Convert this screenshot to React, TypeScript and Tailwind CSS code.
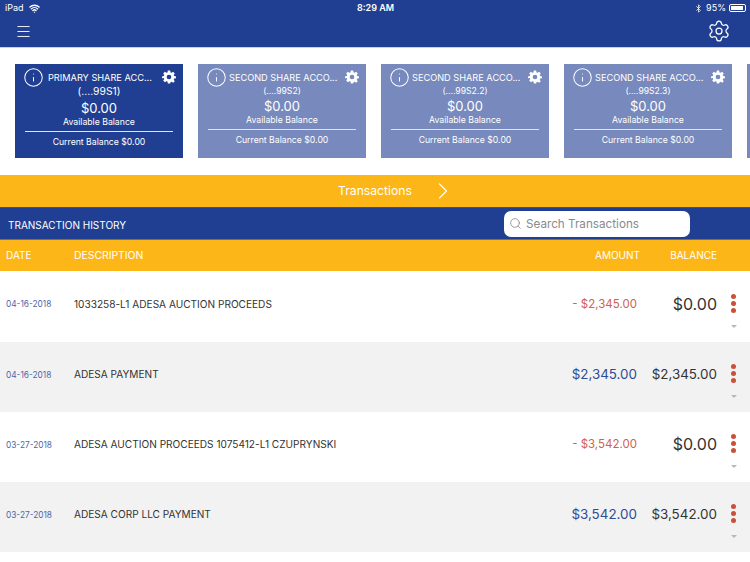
import { Settings, ChevronRight, Search, Wifi, Bluetooth, Menu, Info } from 'lucide-react'

const accounts = [
  { name: 'PRIMARY SHARE ACC...', num: '(....99S1)', primary: true },
  { name: 'SECOND SHARE ACCO...', num: '(....99S2)', primary: false },
  { name: 'SECOND SHARE ACCO...', num: '(....99S2.2)', primary: false },
  { name: 'SECOND SHARE ACCO...', num: '(....99S2.3)', primary: false },
]

const rows = [
  { date: '04-16-2018', desc: '1033258-L1 ADESA AUCTION PROCEEDS', amount: '- $2,345.00', credit: false, balance: '$0.00' },
  { date: '04-16-2018', desc: 'ADESA PAYMENT', amount: '$2,345.00', credit: true, balance: '$2,345.00' },
  { date: '03-27-2018', desc: 'ADESA AUCTION PROCEEDS 1075412-L1 CZUPRYNSKI', amount: '- $3,542.00', credit: false, balance: '$0.00' },
  { date: '03-27-2018', desc: 'ADESA CORP LLC PAYMENT', amount: '$3,542.00', credit: true, balance: '$3,542.00' },
]

function Gear() {
  return (
    <svg viewBox="0 0 24 24" className="w-[14px] h-[14px] shrink-0" fill="white">
      <path fillRule="evenodd" d="M10 1h4l.6 3.1 1.9.8 2.6-1.8 2.8 2.8-1.8 2.6.8 1.9L24 11v3l-3.1.6-.8 1.9 1.8 2.6-2.8 2.8-2.6-1.8-1.9.8L14 23h-4l-.6-3.1-1.9-.8-2.6 1.8-2.8-2.8 1.8-2.6-.8-1.9L0 14v-3l3.1-.6.8-1.9L2.1 5.9l2.8-2.8 2.6 1.8 1.9-.8L10 1zm2 7a4 4 0 1 0 0 8 4 4 0 0 0 0-8z" />
    </svg>
  )
}

function AccountCard({ name, num, primary }: { name: string; num: string; primary: boolean }) {
  return (
    <div className={`w-[168px] h-[94px] shrink-0 pl-[10px] pr-[7px] pt-[4px] text-white text-center ${primary ? 'bg-[#213f92]' : 'bg-[#7789bd]'}`}>
      <div className="flex items-center h-[18px]">
        <Info size={21} strokeWidth={1.15} className="shrink-0 -ml-[2px] -mr-[1px]" />
        <div className={`flex-1 pt-[1px] text-[9.2px] whitespace-nowrap text-left ${primary ? 'pl-[5px]' : 'pl-[3px]'}`}>{name}</div>
        <Gear />
      </div>
      <div className="pr-[3px]">
        <div className={`leading-[12px] -mt-px ${primary ? 'text-[10.3px]' : 'text-[8.6px]'}`}>{num}</div>
        <div className={`text-[13px] leading-[16px] ${primary ? 'mt-[3px]' : 'mt-[1px]'}`}>$0.00</div>
        <div className="text-[8.7px] leading-[12px]">Available Balance</div>
        <div className="border-t border-[#dfe4f2] mt-[3px] pt-[4px] text-[8.7px] leading-[12px]">Current Balance $0.00</div>
      </div>
    </div>
  )
}

export default function App() {
  return (
    <div className="w-[750px] h-[562px] overflow-hidden bg-white font-['Inter','Liberation_Sans',sans-serif]">
      <header className="bg-[#213f92] h-[48px] text-white border-b border-[#c9d1e6]">
        <div className="flex items-center justify-between h-[16px] pl-[5px] pr-[4px] text-[9px]">
          <div className="flex items-center gap-[5px] flex-1">
            <span>iPad</span>
            <Wifi size={11} strokeWidth={3} />
          </div>
          <span className="font-semibold">8:29 AM</span>
          <div className="flex items-center justify-end gap-[3px] flex-1">
            <Bluetooth size={9} />
            <span>95%</span>
            <div className="w-[17px] h-[8px] border border-white rounded-[2px] p-px">
              <div className="h-full w-[90%] bg-white" />
            </div>
          </div>
        </div>
        <div className="flex items-center justify-between pl-[15px] pr-[19px] h-[30px]">
          <Menu size={17} strokeWidth={1.3} />
          <Settings size={24} strokeWidth={1.25} />
        </div>
      </header>

      <section className="flex gap-[15px] pl-[15px] pt-[16px] pb-[17px] overflow-hidden">
        {accounts.map((a, i) => (
          <AccountCard key={i} {...a} />
        ))}
        <div className="w-[168px] h-[94px] shrink-0 bg-[#7789bd]" />
      </section>

      <div className="bg-[#fdb618] h-[32px] flex items-center text-white text-[12.2px]">
        <div className="flex-1" />
        <span className="pt-[1px]">Transactions</span>
        <div className="flex-1 flex items-center">
          <ChevronRight size={28} strokeWidth={1} className="ml-[17px]" />
        </div>
      </div>

      <div className="bg-[#213f92] h-[32px] flex items-center justify-between pl-[8px] pr-[60px] text-white border-t border-[#4a4f5c]">
        <span className="text-[10px] pt-[3px]">TRANSACTION HISTORY</span>
        <div className="w-[186px] h-[26px] bg-white rounded-[7px] flex items-center gap-[4px] pl-[5px] text-[11.7px] text-[#8a8a8e]">
          <Search size={13} strokeWidth={1.5} />
          <span className="pt-[2px]">Search Transactions</span>
        </div>
      </div>

      <div className="bg-[#fdb618] h-[32px] flex items-center text-white text-[10px] border-t border-[#7a7150]">
        <span className="w-[74px] pl-[6px]">DATE</span>
        <span className="flex-1 text-[10.4px]">DESCRIPTION</span>
        <span className="w-[80px] text-right">AMOUNT</span>
        <span className="w-[77px] text-right">BALANCE</span>
        <span className="w-[33px]" />
      </div>

      {rows.map((r, i) => (
        <div key={i} className={`flex items-center ${i === 0 ? 'h-[71px]' : 'h-[70px]'} ${i % 2 ? 'bg-[#f2f2f2]' : 'bg-white'}`}>
          <span className="w-[74px] pl-[6px] pb-[4px] text-[8.3px] text-[#4f66a8]">{r.date}</span>
          <span className="flex-1 pb-[4px] text-[10.1px] text-[#333333] whitespace-nowrap">{r.desc}</span>
          <span className={`w-[100px] text-right ${r.credit ? 'pb-[5px] text-[13.4px] text-[#2f4b96]' : 'pb-[4px] text-[11.5px] text-[#d25f4e]'}`}>{r.amount}</span>
          <span className={`w-[80px] pb-[6px] text-right text-[#333333] ${r.balance === '$0.00' ? 'text-[16px]' : 'text-[13.4px]'}`}>{r.balance}</span>
          <div className="w-[33px] flex flex-col items-center gap-[2px] pt-[8px]">
            <span className="w-[5px] h-[5px] rounded-full bg-[#c9513a]" />
            <span className="w-[5px] h-[5px] rounded-full bg-[#c9513a]" />
            <span className="w-[5px] h-[5px] rounded-full bg-[#c9513a]" />
            <span className="mt-[10px] w-0 h-0 border-x-[3px] border-x-transparent border-t-[3px] border-t-[#b8b8b8]" />
          </div>
        </div>
      ))}
    </div>
  )
}
